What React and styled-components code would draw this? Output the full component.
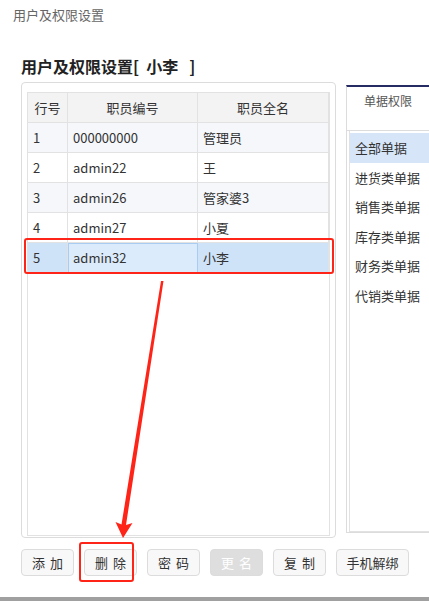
import React from 'react'
import styled, { createGlobalStyle } from 'styled-components'

const GlobalStyle = createGlobalStyle`
  html, body {
    margin: 0;
    padding: 0;
    background: #fff;
    overflow: hidden;
  }
  body {
    font-family: "Noto Sans CJK SC", "Noto Sans", "Liberation Sans", sans-serif;
    color: #333;
  }
`

const Page = styled.div`
  position: relative;
  width: 429px;
  height: 601px;
  overflow: hidden;
  display: flex;
  flex-direction: column;
`

const TopTitle = styled.div`
  height: 30px;
  line-height: 30px;
  padding-left: 13px;
  font-size: 13px;
  color: #666;
`

const Heading = styled.h2`
  margin: 25px 0 0 21px;
  height: 22px;
  line-height: 22px;
  font-size: 16px;
  font-weight: bold;
  color: #222;
  white-space: pre;
`

const Main = styled.div`
  display: flex;
  align-items: flex-start;
  gap: 10px;
  margin: 5px 0 0 21px;
`

const LeftPanel = styled.div`
  box-sizing: border-box;
  width: 316px;
  height: 456px;
  border: 1px solid #dcdcdc;
  border-radius: 4px;
  padding: 9px 5px 1px 5px;
  display: flex;
`

const GridBox = styled.div`
  flex: 1;
  border: 1px solid #e2e2e2;
`

const Table = styled.table`
  border-collapse: separate;
  border-spacing: 0;
  width: 301px;
  table-layout: fixed;
  font-size: 13px;
`

const Th = styled.th`
  box-sizing: border-box;
  height: 30px;
  font-weight: normal;
  background: #f3f3f3;
  border-right: 1px solid #e2e2e2;
  border-bottom: 1px solid #e2e2e2;
  color: #333;
  text-align: center;
  padding: 0;
`

const Row = styled.tr`
  background: ${p => (p.$selected ? '#cfe3f8' : p.$odd ? '#f5f7fb' : '#fff')};
`

const Td = styled.td`
  box-sizing: border-box;
  height: 30px;
  padding: 0 0 0 5px;
  border-right: 1px solid #e2e2e2;
  border-bottom: 1px solid #e2e2e2;
  color: #333;
  ${p => p.$active && `
    background: #dcebfb;
    outline: 1px solid #a9cdf2;
    outline-offset: -1px;
  `}
`

const RightPanel = styled.div`
  box-sizing: border-box;
  margin-top: 3px;
  width: 120px;
  height: 448px;
  flex-shrink: 0;
  border: 1px solid #dcdcdc;
  border-top: 2px solid #262b63;
  display: flex;
  flex-direction: column;
`

const TabHead = styled.div`
  height: 44px;
  box-sizing: border-box;
  width: 82px;
  text-align: center;
  padding-top: 5px;
  font-size: 12px;
  color: #555;
  border-bottom: 1px solid #dcdcdc;
`

const List = styled.div`
  flex: 1;
  margin-left: 2px;
  border-left: 1px solid #e2e2e2;
  border-bottom: 1px solid #e2e2e2;
  padding-top: 2px;
`

const Item = styled.div`
  height: 29.5px;
  line-height: 29px;
  padding-left: 5px;
  font-size: 13px;
  color: #333;
  background: ${p => (p.$active ? '#d6e6f8' : 'transparent')};
`

const Buttons = styled.div`
  display: flex;
  gap: 10px;
  margin: 11px 0 0 21px;
`

const Button = styled.button`
  box-sizing: border-box;
  height: 27px;
  width: ${p => p.$w || 53}px;
  border: 1px solid #dcdcdc;
  border-radius: 4px;
  background: ${p => (p.$disabled ? '#dedede' : '#f8f8f8')};
  color: ${p => (p.$disabled ? '#fff' : '#333')};
  font-family: inherit;
  font-size: 13px;
  letter-spacing: ${p => (p.$spaced ? '5px' : '0')};
  text-indent: ${p => (p.$spaced ? '5px' : '0')};
  padding: 0;
`

const BottomBar = styled.div`
  position: absolute;
  left: 0;
  right: 0;
  bottom: 0;
  height: 4px;
  background: #a0a0a0;
`

const RedBox = styled.div`
  position: absolute;
  box-sizing: border-box;
  border: 2.5px solid #ff2418;
  border-radius: 3px;
  left: ${p => p.$x}px;
  top: ${p => p.$y}px;
  width: ${p => p.$w}px;
  height: ${p => p.$h}px;
  pointer-events: none;
`

const Overlay = styled.svg`
  position: absolute;
  left: 0;
  top: 0;
  pointer-events: none;
`

const rows = [
  ['1', '000000000', '管理员'],
  ['2', 'admin22', '王'],
  ['3', 'admin26', '管家婆3'],
  ['4', 'admin27', '小夏'],
  ['5', 'admin32', '小李'],
]

const types = ['全部单据', '进货类单据', '销售类单据', '库存类单据', '财务类单据', '代销类单据']

export default function App() {
  return (
    <Page>
      <GlobalStyle />
      <TopTitle>用户及权限设置</TopTitle>
      <Heading>{'用户及权限设置[  小李   ]'}</Heading>
      <Main>
        <LeftPanel>
          <GridBox>
            <Table>
              <colgroup>
                <col style={{ width: 40 }} />
                <col style={{ width: 130 }} />
                <col style={{ width: 131 }} />
              </colgroup>
              <thead>
                <tr>
                  <Th>行号</Th>
                  <Th>职员编号</Th>
                  <Th>职员全名</Th>
                </tr>
              </thead>
              <tbody>
                {rows.map((r, i) => (
                  <Row key={r[0]} $odd={i % 2 === 0} $selected={i === 4}>
                    <Td>{r[0]}</Td>
                    <Td $active={i === 4}>{r[1]}</Td>
                    <Td>{r[2]}</Td>
                  </Row>
                ))}
              </tbody>
            </Table>
          </GridBox>
        </LeftPanel>
        <RightPanel>
          <TabHead>单据权限</TabHead>
          <List>
            {types.map((t, i) => (
              <Item key={t} $active={i === 0}>{t}</Item>
            ))}
          </List>
        </RightPanel>
      </Main>
      <Buttons>
        <Button $spaced>添加</Button>
        <Button $spaced>删除</Button>
        <Button $spaced>密码</Button>
        <Button $spaced $disabled>更名</Button>
        <Button $spaced>复制</Button>
        <Button $w={73}>手机解绑</Button>
      </Buttons>
      <BottomBar />
      <RedBox $x={24} $y={238} $w={310} $h={36} />
      <RedBox $x={79} $y={542} $w={55} $h={40} />
      <Overlay width="429" height="601" viewBox="0 0 429 601">
        <polygon points="161,281 163.5,281 126,525 132.5,523 123,538 115.5,522 121.5,524.5" fill="#ff2418" />
      </Overlay>
    </Page>
  )
}
